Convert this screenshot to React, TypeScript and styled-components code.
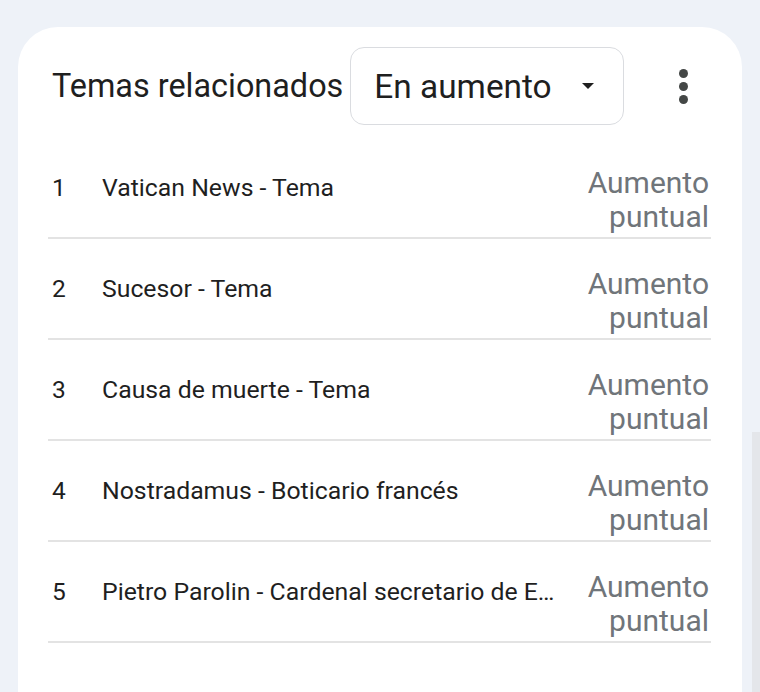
import React from 'react'
import styled, { createGlobalStyle } from 'styled-components'

const GlobalStyle = createGlobalStyle`
  html, body {
    margin: 0;
    padding: 0;
    background: #eef2f8;
    overflow: hidden;
  }
  body {
    font-family: Roboto, 'Noto Sans', Arial, sans-serif;
  }
`

const Page = styled.div`
  width: 760px;
  height: 692px;
  padding: 27px 18px 0 18px;
  box-sizing: border-box;
  position: relative;
  overflow: hidden;
`

const Card = styled.section`
  background: #ffffff;
  border-radius: 40px 40px 0 0;
  height: 700px;
  padding: 20px 31px 0 30px;
  box-sizing: border-box;
`

const Header = styled.header`
  display: flex;
  align-items: center;
  height: 78px;
`

const Title = styled.h2`
  margin: 0 0 0 4px;
  font-size: 32.4px;
  font-weight: 400;
  color: #1f1f1f;
  white-space: nowrap;
`

const Select = styled.div`
  margin-left: 7px;
  width: 274px;
  height: 78px;
  box-sizing: border-box;
  border: 1.5px solid #dadce0;
  border-radius: 14px;
  display: flex;
  align-items: center;
  padding: 0 29px 0 23px;
  font-size: 33.4px;
  color: #1f1f1f;
`

const SelectLabel = styled.span`
  flex: 1;
`

const Caret = styled.span`
  width: 0;
  height: 0;
  border-left: 6px solid transparent;
  border-right: 6px solid transparent;
  border-top: 6px solid #1f1f1f;
`

const MoreButton = styled.button`
  margin-left: auto;
  margin-right: 23px;
  background: none;
  border: 0;
  padding: 0;
  display: flex;
  flex-direction: column;
  gap: 4px;
`

const Dot = styled.span`
  width: 9px;
  height: 9px;
  border-radius: 50%;
  background: #444746;
`

const List = styled.ol`
  list-style: none;
  margin: 13px 0 0 0;
  padding: 0;
`

const Row = styled.li`
  display: flex;
  align-items: center;
  height: 101px;
  box-sizing: border-box;
  border-bottom: 2px solid #e3e3e3;
  padding: 0 2px 0 4px;
`

const Rank = styled.span`
  width: 50px;
  font-size: 24.5px;
  color: #1f1f1f;
  flex: none;
`

const Topic = styled.span`
  flex: 1;
  min-width: 0;
  font-size: 24.8px;
  color: #1f1f1f;
  white-space: nowrap;
  overflow: hidden;
  text-overflow: ellipsis;
  margin-right: 22px;
`

const Value = styled.span`
  text-align: right;
  font-size: 30px;
  line-height: 34px;
  color: #70757a;
  flex: none;
  margin-top: 24px;
`

const Scrollbar = styled.div`
  position: absolute;
  right: 0;
  top: 432px;
  width: 8px;
  bottom: 0;
  background: #e4e6ea;
`

const topics = [
  'Vatican News - Tema',
  'Sucesor - Tema',
  'Causa de muerte - Tema',
  'Nostradamus - Boticario francés',
  'Pietro Parolin - Cardenal secretario de Estado',
]

export default function App() {
  return (
    <Page>
      <GlobalStyle />
      <Card>
        <Header>
          <Title>Temas relacionados</Title>
          <Select>
            <SelectLabel>En aumento</SelectLabel>
            <Caret />
          </Select>
          <MoreButton aria-label="Más opciones">
            <Dot />
            <Dot />
            <Dot />
          </MoreButton>
        </Header>
        <List>
          {topics.map((t, i) => (
            <Row key={i}>
              <Rank>{i + 1}</Rank>
              <Topic>{t}</Topic>
              <Value>
                Aumento
                <br />
                puntual
              </Value>
            </Row>
          ))}
        </List>
      </Card>
      <Scrollbar />
    </Page>
  )
}
